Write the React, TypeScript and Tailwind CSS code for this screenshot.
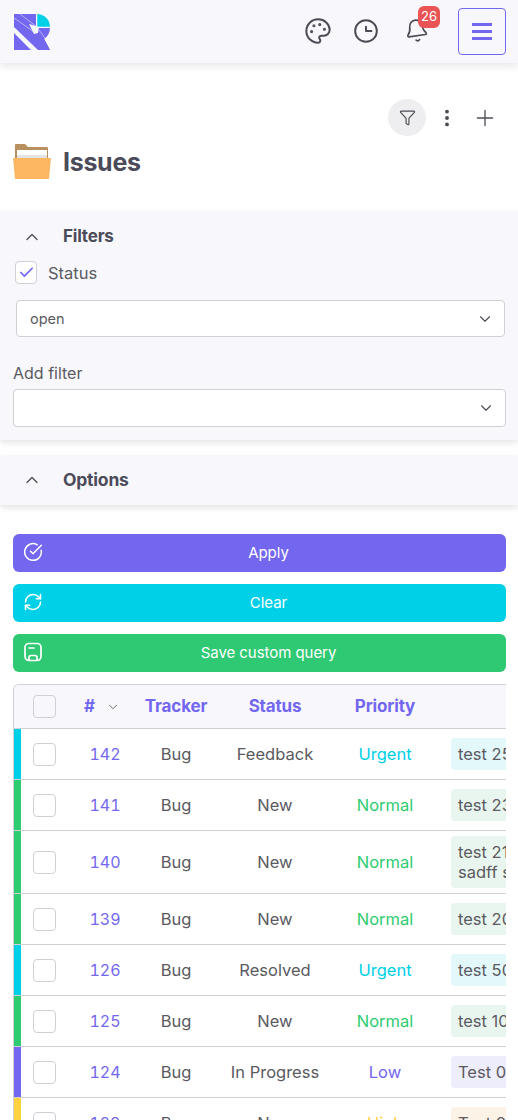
import React from "react";
import { Palette, Bell, Funnel, EllipsisVertical, Plus, ChevronUp, ChevronDown, CircleCheckBig, RefreshCw, Check } from "lucide-react";

const font = { fontFamily: "Inter, 'Noto Sans', sans-serif" };

function Logo() {
  return (
    <svg width="36" height="36" viewBox="0 0 36 36" className="block">
      <path d="M0 0H22V13L27 19L36 36H24L0 13Z" fill="#7367f0" />
      <path d="M0 19L17 36H0Z" fill="#7367f0" />
      <path d="M23 0A13 13 0 0 1 36 13H23Z" fill="#00cfe8" />
      <path d="M23 14H36A13 13 0 0 1 30 25L36 36H25L16 24Z" fill="#7367f0" />
      <path d="M0 4L20 18M6 0L23 13M23 0V13H36M25 16L31 24" stroke="#f8f8fc" strokeWidth="0.8" fill="none" opacity="0.65" />
      <path d="M15 10L25 13L24 19L20 20Z" fill="#f8f8fc" />
    </svg>
  );
}

function Folder() {
  return (
    <svg width="38" height="37" viewBox="0 0 38 37" className="block">
      <path d="M2 2a1 1 0 0 1 1-1h9l3 3h19a1 1 0 0 1 1 1v12H2Z" fill="#b98f5f" />
      <rect x="4" y="7" width="30" height="12" fill="#e4e4e4" />
      <rect x="4" y="7" width="30" height="5" fill="#ffffff" />
      <path d="M0 15H38L36 36H2Z" fill="#fdb763" />
    </svg>
  );
}

function SaveIcon() {
  return (
    <svg width="20" height="20" viewBox="0 0 20 20" fill="none" stroke="white" strokeWidth="1.7" strokeLinejoin="round" strokeLinecap="round">
      <rect x="2" y="1.5" width="16" height="17" rx="4" />
      <path d="M6 6h5" />
      <path d="M6 18v-2.5a2 2 0 0 1 2-2h4a2 2 0 0 1 2 2V18" />
    </svg>
  );
}

function Action({ label, bg, icon }: { label: string; bg: string; icon: React.ReactNode }) {
  return (
    <button className={`relative h-[38px] w-full rounded-[6px] ${bg} pl-[18px] text-[15px] text-white flex items-center justify-center tracking-[-0.05px]`}>
      <span className="absolute left-[10px] top-[8px]">{icon}</span>
      {label}
    </button>
  );
}

type Row = { id: number; status: string; priority: string; subject: string; h: string; stripe: string; text: string; chip: string };

const cyan = { stripe: "bg-[#00cfe8]", text: "text-[#00cfe8]", chip: "bg-[#e3f8fb]" };
const green = { stripe: "bg-[#2ecc71]", text: "text-[#2ecc71]", chip: "bg-[#e9f6ef]" };
const purple = { stripe: "bg-[#7367f0]", text: "text-[#7367f0]", chip: "bg-[#eeedfc]" };
const yellow = { stripe: "bg-[#ffd23f]", text: "text-[#ffd23f]", chip: "bg-[#fdf2e6]" };

const rows: Row[] = [
  { id: 142, status: "Feedback", priority: "Urgent", subject: "test 25", h: "h-[51px]", ...cyan },
  { id: 141, status: "New", priority: "Normal", subject: "test 23", h: "h-[51px]", ...green },
  { id: 140, status: "New", priority: "Normal", subject: "test 21 sadff s", h: "h-[63px]", ...green },
  { id: 139, status: "New", priority: "Normal", subject: "test 20", h: "h-[51px]", ...green },
  { id: 126, status: "Resolved", priority: "Urgent", subject: "test 50", h: "h-[51px]", ...cyan },
  { id: 125, status: "New", priority: "Normal", subject: "test 10", h: "h-[51px]", ...green },
  { id: 124, status: "In Progress", priority: "Low", subject: "Test 05", h: "h-[51px]", ...purple },
  { id: 123, status: "New", priority: "High", subject: "Test 04", h: "h-[51px]", ...yellow },
];

function Box({ bg = "bg-white" }: { bg?: string }) {
  return <div className={`h-[23px] w-[23px] rounded-[4px] border border-[#cfcfd6] ${bg}`} />;
}

function TableRow({ r }: { r: Row }) {
  const two = r.subject.length > 10;
  return (
    <div className={`flex ${r.h} border-b border-[#d0d0d6] items-stretch text-[16.5px] text-[#5a5a60]`}>
      <div className={`w-[7px] shrink-0 ${r.stripe}`} />
      <div className="w-[49px] shrink-0 flex items-center pl-[12px]"><Box /></div>
      <div className="w-[70px] shrink-0 flex items-center justify-center text-[16px] text-[#7367f0] tabular-nums">{r.id}</div>
      <div className="w-[72px] shrink-0 flex items-center justify-center">Bug</div>
      <div className="w-[126px] shrink-0 flex items-center justify-center">{r.status}</div>
      <div className="w-[94px] shrink-0 flex items-center justify-center">
        <span className={r.text}>{r.priority}</span>
      </div>
      <div className="flex-1 min-w-0 pl-[19px] flex items-center">
        <div className={`w-[120px] shrink-0 rounded-[4px] ${r.chip} px-[7px] py-[6px] leading-[20px] ${two ? "" : "whitespace-nowrap"}`}>
          {two ? <>test 21<br />sadff sd</> : r.subject}
        </div>
      </div>
    </div>
  );
}

export default function App() {
  return (
    <div className="w-[518px] h-[1120px] overflow-hidden bg-white" style={font}>
      <header className="relative h-[63px] bg-[#f8f8fc] shadow-[0_3px_8px_rgba(0,0,0,0.1)] flex items-center pl-[14px] pr-[12px]">
        <Logo />
        <div className="ml-auto flex items-center text-[#4b4b55]">
          <Palette size={28} strokeWidth={1.7} className="-mt-[2px]" />
          <svg width="26" height="26" viewBox="0 0 24 24" fill="none" stroke="currentColor" strokeWidth="1.8" strokeLinecap="round" strokeLinejoin="round" className="ml-[21px] -mt-[1px]">
            <circle cx="12" cy="12" r="10" />
            <path d="M12 8v4h5" />
          </svg>
          <div className="relative ml-[25px] -mt-[2px]">
            <Bell size={25} strokeWidth={1.6} className="-rotate-[8deg]" />
            <span className="absolute -right-[11px] -top-[12px] flex h-[22px] w-[22px] items-center justify-center rounded-[6px] bg-[#ea5455] text-[13px] text-white">26</span>
          </div>
          <button className="ml-[29px] flex h-[47px] w-[48px] flex-col items-center justify-center gap-[4px] rounded-[4px] border border-[#7367f0]">
            <span className="block h-[3px] w-[20px] bg-[#7367f0]" />
            <span className="block h-[3px] w-[20px] bg-[#7367f0]" />
            <span className="block h-[3px] w-[20px] bg-[#7367f0]" />
          </button>
        </div>
      </header>

      <div className="relative h-[148px] pt-[36px]">
        <div className="flex items-center justify-end pr-[20px] text-[#4b4b55]">
          <div className="flex h-[37px] w-[38px] items-center justify-center rounded-full bg-[#eeeef0]">
            <Funnel size={17} strokeWidth={1.6} className="-mt-[1px]" />
          </div>
          <EllipsisVertical size={22} strokeWidth={2.2} className="ml-[10px]" />
          <Plus size={26} strokeWidth={1.2} className="ml-[14px]" />
        </div>
        <div className="mt-[7px] flex items-center pl-[13px]">
          <Folder />
          <h1 className="ml-[12px] text-[25px] font-bold leading-[30px] text-[#4b4b5a] tracking-[-0.3px]">Issues</h1>
        </div>
      </div>

      <section className="h-[229px] bg-[#f8f8fc] shadow-[0_3px_6px_rgba(0,0,0,0.1)] pt-[15px] text-[#5a5a60]">
        <div className="flex h-[22px] items-center pl-[22px]">
          <ChevronUp size={20} strokeWidth={1.5} className="text-[#4b4b55]" />
          <span className="ml-[21px] text-[17px] font-bold tracking-[-0.2px] text-[#4b4b5a]">Filters</span>
        </div>
        <div className="mt-[13px] flex items-center pl-[15px]">
          <div className="flex h-[23px] w-[22px] items-center justify-center rounded-[4px] border border-[#cfcfd6] bg-white">
            <Check size={17} strokeWidth={2.4} className="text-[#7367f0]" />
          </div>
          <span className="ml-[11px] text-[16.5px] leading-[20px]">Status</span>
        </div>
        <div className="ml-[16px] mr-[13px] mt-[16px] flex h-[37px] items-center justify-between rounded-[4px] border border-[#cfcfd6] bg-white pl-[13px] pr-[10px] text-[14.5px]">
          <span>open</span>
          <ChevronDown size={18} strokeWidth={1.5} className="text-[#4b4b55]" />
        </div>
        <div className="ml-[13px] mt-[25px] text-[16px] leading-[22px]">Add filter</div>
        <div className="ml-[13px] mr-[12px] mt-[5px] flex h-[38px] items-center justify-end rounded-[4px] border border-[#cfcfd6] bg-white pr-[10px]">
          <ChevronDown size={18} strokeWidth={1.5} className="text-[#4b4b55]" />
        </div>
      </section>

      <section className="mt-[15px] flex h-[50px] items-center bg-[#f8f8fc] pl-[22px] shadow-[0_3px_6px_rgba(0,0,0,0.1)]">
        <ChevronUp size={20} strokeWidth={1.5} className="text-[#4b4b55]" />
        <span className="ml-[21px] text-[17.5px] font-bold tracking-[-0.2px] text-[#4b4b5a]">Options</span>
      </section>

      <div className="mx-[13px] mt-[29px] mr-[12px] flex flex-col gap-[12px]">
        <Action label="Apply" bg="bg-[#7367f0]" icon={<CircleCheckBig size={20} strokeWidth={1.8} />} />
        <Action label="Clear" bg="bg-[#00cfe8]" icon={<RefreshCw size={20} strokeWidth={1.8} />} />
        <Action label="Save custom query" bg="bg-[#2fc973]" icon={<SaveIcon />} />
      </div>

      <div className="ml-[13px] mr-[12px] mt-[12px] overflow-hidden rounded-tl-[6px] border-l border-t border-[#d0d0d6]">
        <div className="flex h-[44px] items-center border-b border-[#d0d0d6] bg-[#f8f8fc] text-[17px] font-bold text-[#7367f0] tracking-[-0.15px]">
          <div className="w-[56px] shrink-0 pl-[19px]"><Box bg="bg-[#f8f8fc]" /></div>
          <div className="flex w-[70px] shrink-0 items-center pl-[14px]">
            #<ChevronDown size={14} strokeWidth={1.5} className="ml-[11px] text-[#5a5a64]" />
          </div>
          <div className="w-[72px] shrink-0 text-center">Tracker</div>
          <div className="w-[126px] shrink-0 text-center">Status</div>
          <div className="w-[94px] shrink-0 text-center">Priority</div>
        </div>
        {rows.map((r) => <TableRow key={r.id} r={r} />)}
      </div>
    </div>
  );
}
